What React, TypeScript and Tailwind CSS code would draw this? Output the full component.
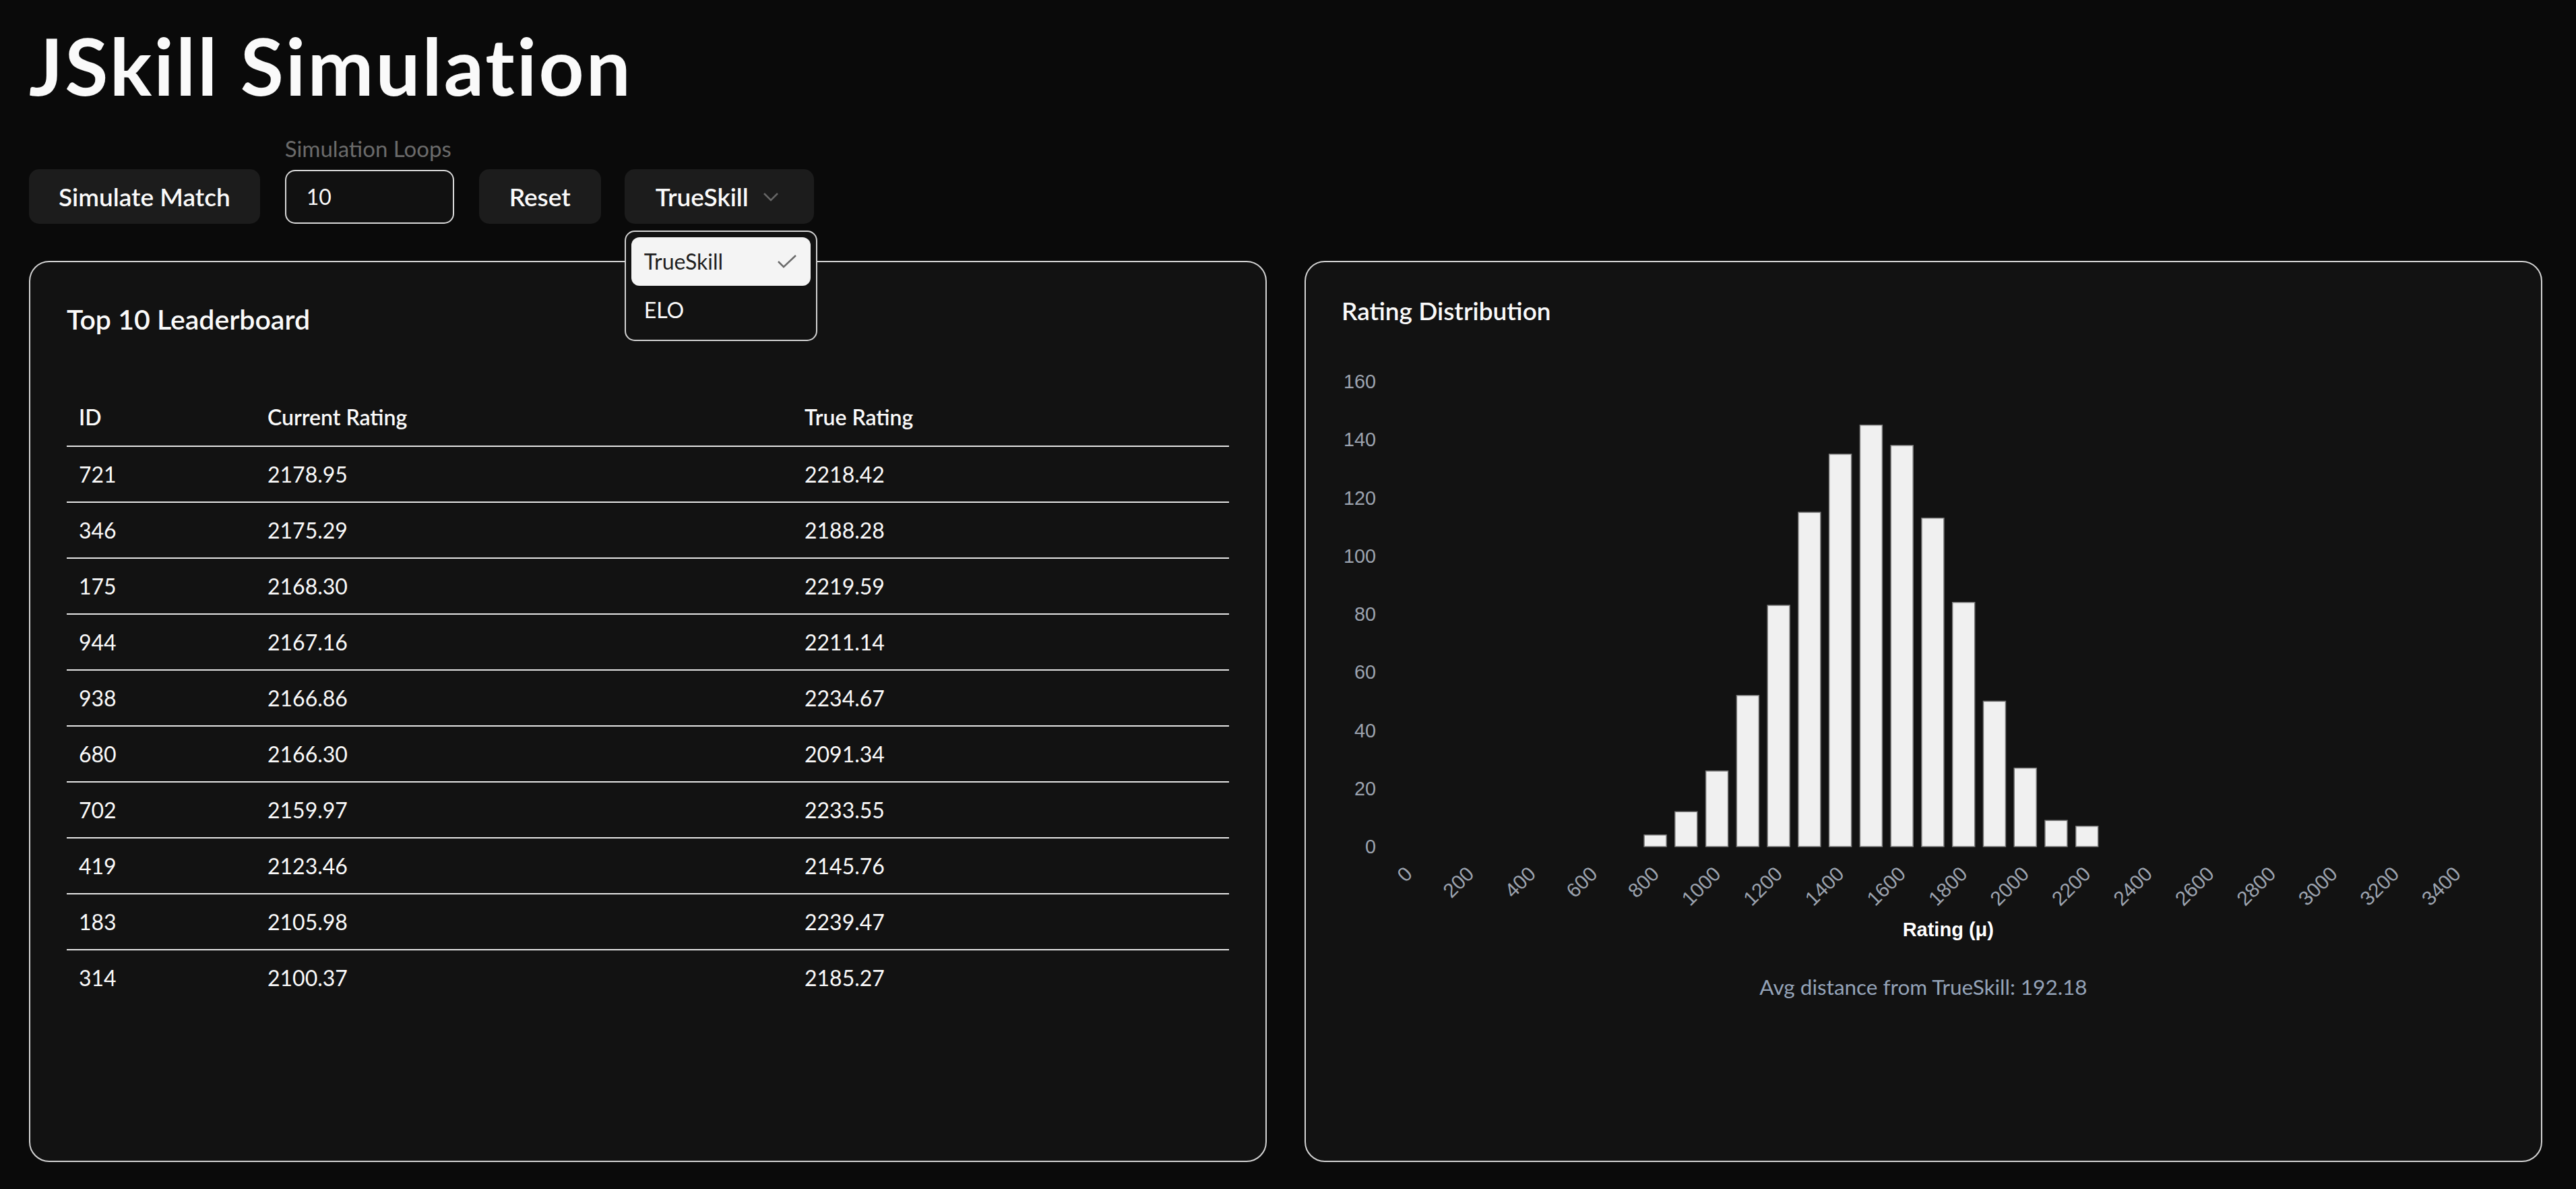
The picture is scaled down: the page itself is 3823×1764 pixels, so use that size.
import React from "react";

const rows = [
  ["721", "2178.95", "2218.42"],
  ["346", "2175.29", "2188.28"],
  ["175", "2168.30", "2219.59"],
  ["944", "2167.16", "2211.14"],
  ["938", "2166.86", "2234.67"],
  ["680", "2166.30", "2091.34"],
  ["702", "2159.97", "2233.55"],
  ["419", "2123.46", "2145.76"],
  ["183", "2105.98", "2239.47"],
  ["314", "2100.37", "2185.27"],
];

// histogram bins of 100, index = rating / 100
const counts: Record<number, number> = {
  8: 4, 9: 12, 10: 26, 11: 52, 12: 83, 13: 115, 14: 135, 15: 145,
  16: 138, 17: 113, 18: 84, 19: 50, 20: 27, 21: 9, 22: 7,
};

function RatingChart() {
  const left = 76.6;
  const right = 1724;
  const bins = 36;
  const pitch = (right - left) / bins;
  const y0 = 755;
  const unit = 4.3125;
  const barW = 33;
  const font = "'Liberation Sans', Arial, sans-serif";

  return (
    <svg width="1726" height="900" viewBox="0 0 1726 900" className="block">
      {[0, 20, 40, 60, 80, 100, 120, 140, 160].map((v) => (
        <text
          key={v}
          x={51}
          y={y0 - v * unit}
          textAnchor="end"
          dominantBaseline="central"
          fontFamily={font}
          fontSize="28.8"
          fill="#9ca3af"
        >
          {v}
        </text>
      ))}
      {Object.entries(counts).map(([bin, n]) => {
        const cx = left + (Number(bin) + 0.5) * pitch;
        const h = n * unit;
        return (
          <rect
            key={bin}
            x={cx - barW / 2}
            y={y0 - h}
            width={barW}
            height={h}
            fill="#f0f0f0"
            stroke="#7a7a7a"
            strokeWidth="1.5"
          />
        );
      })}
      {Array.from({ length: 18 }, (_, i) => i * 2).map((bin) => {
        const cx = left + (bin + 0.5) * pitch;
        return (
          <text
            key={bin}
            transform={`translate(${cx} 790) rotate(-45)`}
            textAnchor="end"
            dominantBaseline="central"
            fontFamily={font}
            fontSize="30"
            fill="#9ca3af"
          >
            {bin * 100}
          </text>
        );
      })}
      <text
        x={(left + right) / 2}
        y={878}
        textAnchor="middle"
        dominantBaseline="central"
        fontFamily={font}
        fontSize="29"
        fontWeight="bold"
        fill="#ffffff"
      >
        Rating (μ)
      </text>
    </svg>
  );
}

export default function App() {
  return (
    <div className="min-h-screen bg-[#0a0a0a] text-[#fafafa] font-['Lato',sans-serif] pl-[43px] pr-[50px] pt-[39px]">
      <h1 className="text-[117px] leading-none font-bold tracking-[0.026em] m-0">JSkill Simulation</h1>

      {/* Controls */}
      <div className="flex items-end gap-[37px] mt-[48px]">
        <button className="h-[81px] px-[44px] rounded-[15px] bg-[#1c1c1c] text-[37px] font-semibold leading-none">
          Simulate Match
        </button>
        <div className="flex flex-col">
          <label className="text-[33px] leading-none text-[#6b6b6b] mb-[15px]">Simulation Loops</label>
          <div className="h-[80px] w-[251px] rounded-[15px] border-2 border-[#d9d9d9] bg-[#111111] px-[30px] flex items-center text-[32px]">
            10
          </div>
        </div>
        <button className="h-[81px] px-[45px] rounded-[15px] bg-[#1c1c1c] text-[37px] font-semibold leading-none">
          Reset
        </button>
        <div className="relative -ml-[2px]">
          <button className="h-[81px] w-[281px] pl-[46px] pr-[52px] rounded-[15px] bg-[#1c1c1c] text-[37px] font-semibold leading-none flex items-center justify-between">
            <span>TrueSkill</span>
            <svg width="24" height="14" viewBox="0 0 24 14" fill="none">
              <polyline points="2,2 12,12 22,2" stroke="#666666" strokeWidth="2.5" />
            </svg>
          </button>
          <div className="absolute left-0 top-[91px] z-10 w-[286px] rounded-[15px] border-2 border-[#d4d4d4] bg-[#121212] p-[8px]">
            <div className="h-[72px] rounded-[12px] bg-[#f4f4f4] text-[#1f1f1f] pl-[19px] pr-[20px] flex items-center justify-between text-[32px]">
              <span>TrueSkill</span>
              <svg width="30" height="22" viewBox="0 0 30 22" fill="none">
                <polyline points="2,11 10,19 28,2" stroke="#6b6b6b" strokeWidth="2.5" />
              </svg>
            </div>
            <div className="h-[72px] pl-[19px] flex items-center text-[32px]">ELO</div>
          </div>
        </div>
      </div>

      {/* Cards */}
      <div className="grid grid-cols-2 gap-[56px] mt-[55px]">
        <div className="h-[1337px] rounded-[30px] border-2 border-[#d4d4d4] bg-[#121212] px-[54px] pt-[64px]">
          <h2 className="text-[41px] leading-none font-semibold m-0">Top 10 Leaderboard</h2>
          <table className="w-full border-collapse mt-[82px] text-[32px]">
            <colgroup>
              <col className="w-[280px]" />
              <col className="w-[797px]" />
              <col />
            </colgroup>
            <thead>
              <tr className="border-b-2 border-[#e5e5e5]">
                <th className="h-[86px] px-[18px] text-left font-semibold align-middle">ID</th>
                <th className="h-[86px] px-[18px] text-left font-semibold align-middle">Current Rating</th>
                <th className="h-[86px] px-[18px] text-left font-semibold align-middle">True Rating</th>
              </tr>
            </thead>
            <tbody>
              {rows.map((r, i) => (
                <tr key={r[0]} className={i < rows.length - 1 ? "border-b-2 border-[#e5e5e5]" : ""}>
                  {r.map((c, j) => (
                    <td key={j} className="h-[83px] px-[18px] align-middle">
                      {c}
                    </td>
                  ))}
                </tr>
              ))}
            </tbody>
          </table>
        </div>

        <div className="h-[1337px] rounded-[30px] border-2 border-[#d4d4d4] bg-[#121212] px-[53px] pt-[53px]">
          <h2 className="text-[37px] leading-none font-semibold m-0">Rating Distribution</h2>
          <div className="mt-[22px]">
            <RatingChart />
          </div>
          <p className="mt-[48px] text-center text-[31.5px] leading-none text-[#94a3b8]">
            Avg distance from TrueSkill: 192.18
          </p>
        </div>
      </div>
    </div>
  );
}
